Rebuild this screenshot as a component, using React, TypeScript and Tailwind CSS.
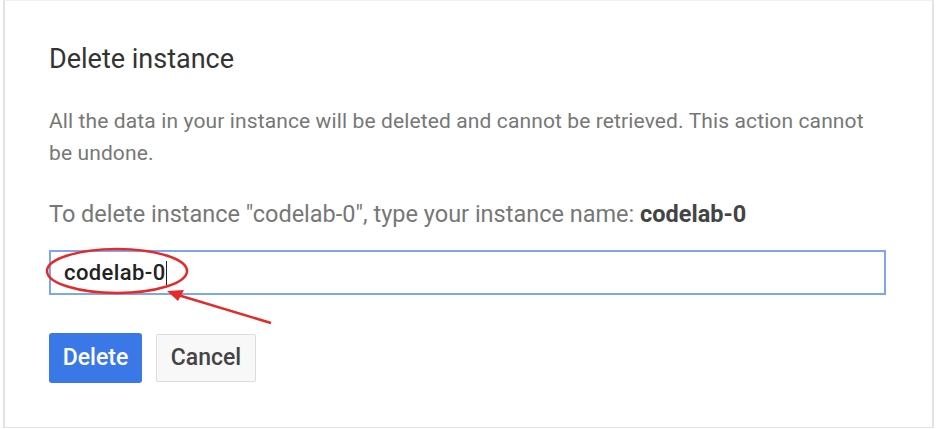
import { FC } from 'react';

const App: FC = () => {
  return (
    <div className="relative w-[936px] h-[429px] bg-white overflow-hidden" style={{ fontFamily: 'Roboto, "Noto Sans", sans-serif' }}>
      <div className="ml-[3px] w-[931px] h-[428px] border-x-2 border-b border-t border-[#e2e2e2] border-t-[#f0f0f0] pl-[44px] pt-[42px]">
        <h2 className="text-[27px] leading-[32px] text-[#333]">Delete instance</h2>

        <p className="mt-[30px] text-[21px] leading-[32px] tracking-[0.12px] text-[#777] w-[835px]">
          All the data in your instance will be deleted and cannot be retrieved. This action cannot be undone.
        </p>

        <p className="mt-[29px] text-[23.5px] leading-[32px] text-[#777] whitespace-nowrap">
          To delete instance "codelab-0", type your instance name: <span className="font-bold text-[#444]">codelab-0</span>
        </p>

        <div className="mt-[20px] w-[837px] h-[45px] border-2 border-[#7ea6f0] flex items-center pl-[13px]">
          <span className="text-[22px] leading-[28px] text-[#222] font-medium tracking-[0.4px]">codelab-0</span>
          <span className="w-[1px] h-[24px] bg-[#222]" />
        </div>

        <div className="mt-[38px] flex items-start gap-[14px]">
          <button className="w-[93px] h-[50px] bg-[#3b78e7] rounded-[3px] text-white text-[23px] font-medium">Delete</button>
          <button className="mt-[1px] w-[100px] h-[48px] bg-[#f8f8f8] border border-[#dcdcdc] rounded-[2px] text-[#444] text-[23px] font-medium">Cancel</button>
        </div>
      </div>

      <svg className="absolute left-0 top-0 pointer-events-none" width="936" height="429" viewBox="0 0 936 429">
        <ellipse cx="117" cy="271" rx="70" ry="22" fill="none" stroke="#e62a2a" strokeWidth="2.5" />
        <line x1="271" y1="323" x2="178" y2="295" stroke="#e62a2a" strokeWidth="2.5" />
        <polygon points="167,291 184,290 178,301" fill="#e62a2a" />
      </svg>
    </div>
  );
};

export default App;
